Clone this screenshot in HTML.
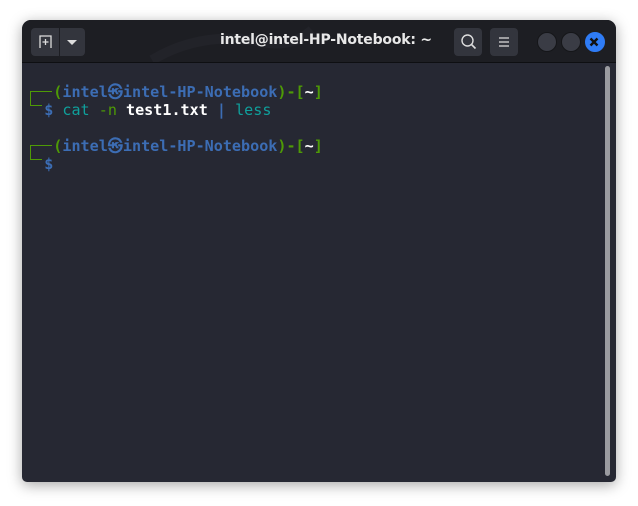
<!DOCTYPE html>
<html><head><style>
body{margin:0;width:638px;height:506px;background:#fff;overflow:hidden;position:relative;}
.win{position:absolute;left:22px;top:20px;width:594px;height:462px;border-radius:9px 9px 5px 5px;background:#262833;box-shadow:0 3px 14px rgba(0,0,0,.35);overflow:hidden;}
.tb{position:absolute;left:0;top:0;width:100%;height:42px;background:#1d1e23;border-bottom:1px solid #0e0f12;}
.title{position:absolute;left:0;right:0;top:12px;text-align:center;color:#e8e8e8;font:bold 14px "DejaVu Sans","Liberation Sans",sans-serif;letter-spacing:-0.2px;padding-left:14px}
.btn{position:absolute;top:8px;height:28px;background:#33353d;border-radius:4px;}
.circ{position:absolute;top:12px;width:18px;height:18px;border-radius:50%;background:#3a3c45;border:1px solid #151619}
.term{position:absolute;left:4px;top:63px;font:bold 15.1px "DejaVu Sans Mono","Liberation Mono",monospace;line-height:18px;white-space:pre;color:#fff}
.g{color:#4e9a06}.b{color:#3c6db4}.c{color:#0fa09c;font-weight:normal}.w{color:#fff}
.sb{position:absolute;left:583px;top:46px;width:5px;height:410px;background:#9a9ba0;border-radius:3px}
.v{position:absolute;left:8px;width:1px;height:15px;background:#4e9a06}
.h{position:absolute;left:8px;height:1px;background:#4e9a06}
</style></head><body>
<div class="win">
<div class="tb">
 <svg style="position:absolute;left:120px;top:0" width="180" height="42"><path d="M10 40 Q60 10 120 22 Q150 28 170 10" stroke="#222329" stroke-width="10" fill="none"/></svg>
 <div class="btn" style="left:9px;width:54px"></div>
 <div style="position:absolute;left:37px;top:8px;width:1px;height:28px;background:#1d1e23"></div>
 <svg style="position:absolute;left:16px;top:14px" width="16" height="16"><path d="M2 14 V2 H13 V14" stroke="#ddd" stroke-width="1.3" fill="none"/><path d="M7.5 5 V11 M4.5 8 H10.5" stroke="#ddd" stroke-width="1.3"/></svg>
 <svg style="position:absolute;left:44px;top:19px" width="12" height="8"><path d="M1 1 H11 L6 6Z" fill="#ddd"/></svg>
 <div class="title">intel@intel-HP-Notebook: ~</div>
 <div class="btn" style="left:432px;width:28px"></div>
 <svg style="position:absolute;left:438px;top:13px" width="18" height="18"><circle cx="7.5" cy="7.5" r="5.5" stroke="#ddd" stroke-width="1.4" fill="none"/><path d="M11.5 11.5 L15.5 15.5" stroke="#ddd" stroke-width="1.6"/></svg>
 <div class="btn" style="left:468px;width:28px"></div>
 <svg style="position:absolute;left:476px;top:16px" width="12" height="12"><path d="M1 2H11M1 6H11M1 10H11" stroke="#ddd" stroke-width="1.2"/></svg>
 <div class="circ" style="left:515px"></div>
 <div class="circ" style="left:539px"></div>
 <div class="circ" style="left:563px;background:#2f7cf6;border-color:#2f7cf6"></div>
 <svg style="position:absolute;left:567px;top:17px" width="10" height="10"><path d="M1.5 1.5 L8.5 8.5 M8.5 1.5 L1.5 8.5" stroke="#111" stroke-width="2.4"/></svg>
</div>
<div class="h" style="top:71px;width:22px"></div><div class="v" style="top:71px"></div><div class="h" style="top:85px;width:12px"></div>
<div class="h" style="top:125px;width:22px"></div><div class="v" style="top:125px"></div><div class="h" style="top:139px;width:12px"></div>
<div class="term">   <span class="g">(</span><span class="b">intel㉿intel-HP-Notebook</span><span class="g">)-[</span><span class="w">~</span><span class="g">]</span>
  <span class="b">$</span> <span class="c">cat</span> <span class="g" style="font-weight:normal">-n</span> test1.txt <span class="b">|</span> <span class="c">less</span>

   <span class="g">(</span><span class="b">intel㉿intel-HP-Notebook</span><span class="g">)-[</span><span class="w">~</span><span class="g">]</span>
  <span class="b">$</span></div>
<div class="sb"></div>
</div>
</body></html>
